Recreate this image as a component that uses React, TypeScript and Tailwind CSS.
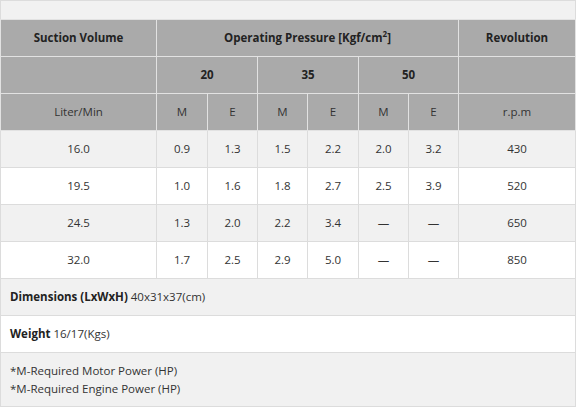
const rows = [
  { vol: "16.0", v: ["0.9", "1.3", "1.5", "2.2", "2.0", "3.2"], rpm: "430" },
  { vol: "19.5", v: ["1.0", "1.6", "1.8", "2.7", "2.5", "3.9"], rpm: "520" },
  { vol: "24.5", v: ["1.3", "2.0", "2.2", "3.4", "—", "—"], rpm: "650" },
  { vol: "32.0", v: ["1.7", "2.5", "2.9", "5.0", "—", "—"], rpm: "850" },
];

const cell = "border border-[#dcdcdc] text-center align-middle p-0";
const head = "border border-[#e2e2e2] text-center align-middle p-0";

const App = () => {
  return (
    <div
      className="w-[576px] h-[410px] bg-white text-[11.5px] text-[#333]"
      style={{ fontFamily: '"Open Sans", "Noto Sans", sans-serif' }}
    >
      <div className="h-[19px] bg-[#f1f1f1] border border-[#dcdcdc] border-b-0"></div>
      <table className="table-fixed border-collapse w-[575px]">
        <colgroup>
          <col className="w-[156px]" />
          <col className="w-[51px]" />
          <col className="w-[50px]" />
          <col className="w-[50px]" />
          <col className="w-[51px]" />
          <col className="w-[50px]" />
          <col className="w-[50px]" />
          <col className="w-[117px]" />
        </colgroup>
        <thead className="bg-[#aaaaaa] font-bold text-[#222]">
          <tr className="h-[37px]">
            <th className={head}>Suction Volume</th>
            <th className={head} colSpan={6}>
              Operating Pressure [Kgf/cm<sup className="text-[8px] -top-[5px]">2</sup>]
            </th>
            <th className={head}>Revolution</th>
          </tr>
          <tr className="h-[37px]">
            <th className={head}></th>
            <th className={head} colSpan={2}>20</th>
            <th className={head} colSpan={2}>35</th>
            <th className={head} colSpan={2}>50</th>
            <th className={head}></th>
          </tr>
          <tr className="h-[37px] text-[#333]">
            <th className={head + " font-normal"}>Liter/Min</th>
            <th className={head + " font-normal"}>M</th>
            <th className={head + " font-normal"}>E</th>
            <th className={head + " font-normal"}>M</th>
            <th className={head + " font-normal"}>E</th>
            <th className={head + " font-normal"}>M</th>
            <th className={head + " font-normal"}>E</th>
            <th className={head + " font-normal"}>r.p.m</th>
          </tr>
        </thead>
        <tbody>
          {rows.map((r, i) => (
            <tr key={r.vol} className={"h-[37px] " + (i % 2 === 0 ? "bg-[#f1f1f1]" : "bg-white")}>
              <td className={cell}>{r.vol}</td>
              {r.v.map((x, j) => (
                <td key={j} className={cell}>{x}</td>
              ))}
              <td className={cell}>{r.rpm}</td>
            </tr>
          ))}
          <tr className="h-[37px] bg-[#f1f1f1]">
            <td className={cell + " text-left pl-[9px]"} colSpan={8}>
              <b className="text-[#222]">Dimensions (LxWxH)</b> 40x31x37(cm)
            </td>
          </tr>
          <tr className="h-[37px] bg-white">
            <td className={cell + " text-left pl-[9px]"} colSpan={8}>
              <b className="text-[#222]">Weight</b> 16/17(Kgs)
            </td>
          </tr>
          <tr className="h-[54px] bg-[#f1f1f1]">
            <td className={cell + " text-left pl-[9px] leading-[18px]"} colSpan={8}>
              <div>*M-Required Motor Power (HP)</div>
              <div>*M-Required Engine Power (HP)</div>
            </td>
          </tr>
        </tbody>
      </table>
    </div>
  );
};

export default App;
